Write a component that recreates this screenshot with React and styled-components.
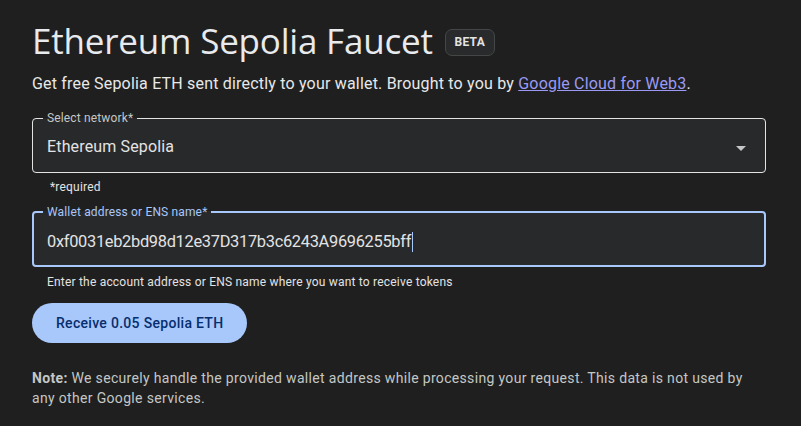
import React from "react";
import styled, { createGlobalStyle } from "styled-components";

const Global = createGlobalStyle`
  html, body { margin: 0; padding: 0; background: #1f1f1f; }
  body { font-family: Roboto, "Liberation Sans", sans-serif; color: #e3e3e3; }
  * { box-sizing: border-box; }
`;

const Page = styled.main`
  padding: 19px 32px 0 32px;
  width: 801px;
  height: 426px;
  overflow: hidden;
`;

const TitleRow = styled.div`
  display: flex;
  align-items: center;
  gap: 12px;
  height: 44px;
`;

const Title = styled.h1`
  margin: 0;
  font-family: "Open Sans", Roboto, sans-serif;
  font-weight: 400;
  font-size: 35px;
  line-height: 44px;
  color: #e8eaed;
  letter-spacing: -0.2px;
`;

const Badge = styled.span`
  display: inline-flex;
  align-items: center;
  justify-content: center;
  width: 50px;
  height: 27px;
  border: 1px solid #444746;
  border-radius: 7px;
  background: #282a2c;
  font-size: 12px;
  font-weight: 700;
  letter-spacing: 0.3px;
  color: #e3e3e3;
  margin-top: 2px;
`;

const Subtitle = styled.p`
  margin: 9px 0 0 0;
  font-size: 16px;
  line-height: 24px;
  letter-spacing: 0.19px;
  color: #e8e8e8;
`;

const Link = styled.a`
  color: #9b99f4;
  text-decoration: underline;
`;

const Field = styled.fieldset`
  margin: ${(p) => p.$top}px 0 0 0;
  padding: 0 10px;
  width: 734px;
  border: ${(p) => (p.$focused ? "2px solid #a8c7fa" : "1px solid #e3e3e3")};
  border-radius: 4px;
  background: #28292b;
  min-width: 0;
`;

const Legend = styled.legend`
  padding: 0 4px;
  margin-left: ${(p) => (p.$focused ? -1 : 0)}px;
  font-size: 12px;
  line-height: 14px;
  letter-spacing: 0.15px;
  color: ${(p) => (p.$focused ? "#a8c7fa" : "#c4c7c5")};
`;

const FieldRow = styled.div`
  display: flex;
  align-items: center;
  justify-content: space-between;
  height: ${(p) => p.$h}px;
  padding: 0 ${(p) => (p.$focused ? 3 : 4)}px ${(p) => p.$pb || 0}px;
`;

const Value = styled.span`
  font-size: 16px;
  line-height: 24px;
  letter-spacing: 0.15px;
  color: #e3e3e3;
`;

const Address = styled.span`
  display: flex;
  align-items: center;
  font-size: 16.4px;
  line-height: 24px;
  letter-spacing: -0.3px;
  color: #e3e3e3;
`;

const Caret = styled.span`
  width: 1px;
  height: 20px;
  background: #a8c7fa;
  margin-left: 1px;
`;

const Arrow = styled.svg`
  width: 10px;
  height: 5px;
  margin-right: 5px;
  margin-top: 2px;
  flex: none;
`;

const Hint = styled.div`
  margin: ${(p) => p.$top}px 0 0 ${(p) => p.$left}px;
  font-size: 12px;
  line-height: 16px;
  letter-spacing: 0.2px;
  color: #e3e3e3;
`;

const Button = styled.button`
  display: block;
  margin-top: 13px;
  height: 40px;
  padding: 0 24px;
  border: none;
  border-radius: 20px;
  background: #a8c7fa;
  color: #062e6f;
  font-family: Roboto, sans-serif;
  font-size: 14px;
  font-weight: 500;
  letter-spacing: 0.3px;
  cursor: pointer;
`;

const Note = styled.p`
  margin: 25px 0 0 0;
  width: 730px;
  font-size: 14px;
  line-height: 20px;
  letter-spacing: 0.33px;
  color: #c4c7c5;
`;

const NoteLabel = styled.strong`
  font-weight: 700;
`;

export default function App() {
  return (
    <>
      <Global />
      <Page>
        <TitleRow>
          <Title>Ethereum Sepolia Faucet</Title>
          <Badge>BETA</Badge>
        </TitleRow>
        <Subtitle>
          Get free Sepolia ETH sent directly to your wallet. Brought to you by{" "}
          <Link href="#">Google Cloud for Web3</Link>.
        </Subtitle>

        <Field $top={15}>
          <Legend>Select network*</Legend>
          <FieldRow $h={47} $pb={3}>
            <Value>Ethereum Sepolia</Value>
            <Arrow viewBox="0 0 10 5">
              <path d="M0 0 L10 0 L5 5 Z" fill="#c4c7c5" />
            </Arrow>
          </FieldRow>
        </Field>
        <Hint $top={6} $left={18}>*required</Hint>

        <Field $top={10} $focused>
          <Legend $focused>Wallet address or ENS name*</Legend>
          <FieldRow $h={46} $focused>
            <Address>
              0xf0031eb2bd98d12e37D317b3c6243A9696255bff
              <Caret />
            </Address>
          </FieldRow>
        </Field>
        <Hint $top={7} $left={15}>
          Enter the account address or ENS name where you want to receive tokens
        </Hint>

        <Button>Receive 0.05 Sepolia ETH</Button>

        <Note>
          <NoteLabel>Note:</NoteLabel> We securely handle the provided wallet address while
          processing your request. This data is not used by any other Google services.
        </Note>
      </Page>
    </>
  );
}
